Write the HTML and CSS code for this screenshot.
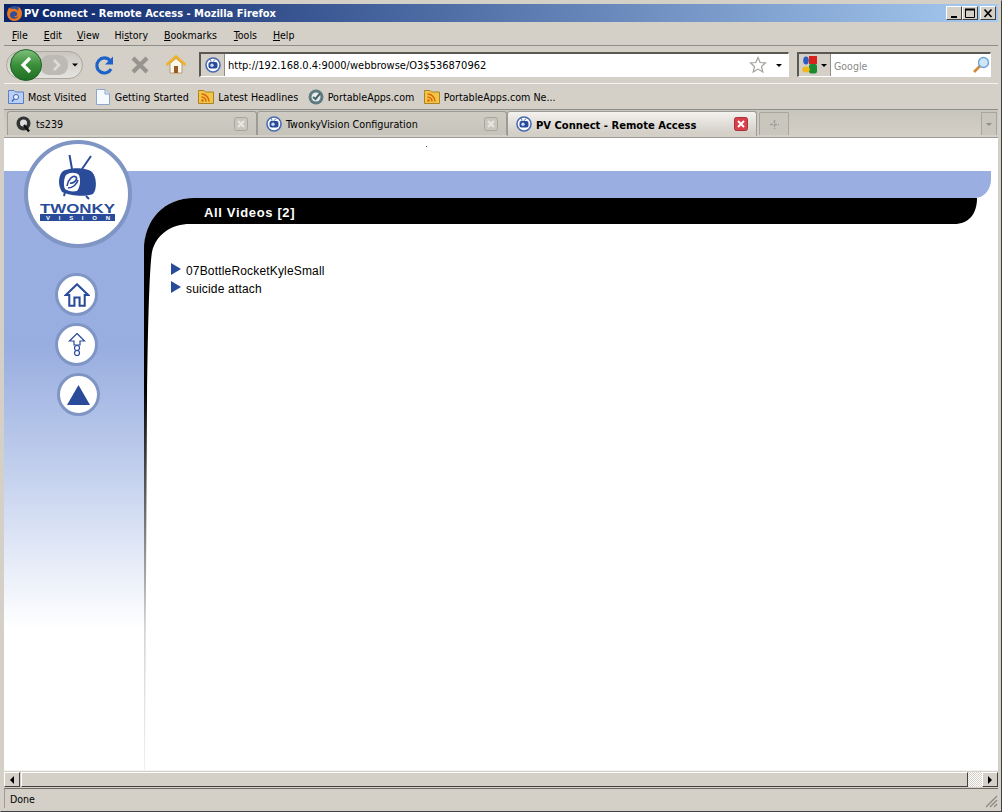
FILE: index.html
```html
<!DOCTYPE html>
<html lang="en">
<head>
    <meta charset="UTF-8">
    <title>PV Connect - Remote Access - Mozilla Firefox</title>
    <link rel="stylesheet" href="styles.css">
</head>
<body>
<svg class="sprite" width="0" height="0">
    <symbol id="tw" viewBox="0 0 16 16">
        <circle cx="8" cy="8" r="7" fill="#fff" stroke="#4a6ab4" stroke-width="1.6"/>
        <rect x="3.5" y="5" width="9" height="6.5" rx="2" fill="#2a4b9a"/>
        <circle cx="7" cy="8.2" r="1.7" fill="#cfdaf2"/>
        <path d="M6 4.8 5.5 2.5M8 4.8 10 2.5" stroke="#2a4b9a" stroke-width=".8"/>
    </symbol>
    <symbol id="rss" viewBox="0 0 16 16">
        <path d="M.5 3.5V1.5H6L7.5 3H15.5V14.5H.5Z" fill="#f3c542" stroke="#a9822a"/>
        <circle cx="4.5" cy="11.5" r="1.3" fill="#d8660e"/>
        <path d="M3.5 8a4.5 4.5 0 0 1 4.5 4.5M3.5 5a7.5 7.5 0 0 1 7.5 7.5" fill="none" stroke="#d8660e" stroke-width="1.6"/>
    </symbol>
    <symbol id="tabx" viewBox="0 0 14 14">
        <rect x=".5" y=".5" width="13" height="13" rx="2" fill="#c9c6be" stroke="#a8a59e"/>
        <path d="M4 4 10 10M10 4 4 10" stroke="#e9e7e2" stroke-width="2"/>
    </symbol>
</svg>

<div class="window">
    <!-- title bar -->
    <div class="titlebar">
        <svg class="ff-icon" width="17" height="17" viewBox="0 0 17 17">
            <circle cx="8.5" cy="8.5" r="7.5" fill="#2f4f9c"/>
            <path d="M3 2.5C2 5 1 7 1.200 9.500 1.500 13.500 5 16 8.500 16 12.500 16 16 13 16 8.500 16 5.500 14.500 3 12 1.500 13 3.500 12.500 5 11.500 5.500 10 3.500 8 3.500 6.500 4 5 3.500 4 3.500 3 2.500Z M5.500 7C7 5.800 10 6 11 8 12 10.500 9.500 12 7 11 8.500 12.500 11 12.500 12 11 11.500 13.500 8 14.500 5.500 13 3.500 11.500 3.500 8.500 5.500 7Z" fill="#e8761c" fill-rule="evenodd"/>
        </svg>
        <span class="title-text">PV Connect - Remote Access - Mozilla Firefox</span>
        <div class="win-btns">
            <div class="win-btn"><svg width="15" height="13"><rect x="4" y="9" width="6" height="2" fill="#000"/></svg></div>
            <div class="win-btn"><svg width="15" height="13"><path d="M2.500 2.500H11.500V10.500H2.500Z M2 2.500H12" fill="none" stroke="#000"/><rect x="2" y="1.500" width="10" height="2" fill="#000"/></svg></div>
            <div class="win-btn btn-close"><svg width="15" height="13"><path d="M3.500 2.500 10.500 10M10.500 2.500 3.500 10" stroke="#000" stroke-width="1.700"/></svg></div>
        </div>
    </div>

    <!-- menu -->
    <div class="menubar">
        <span class="menu-item m-file"><u>F</u>ile</span>
        <span class="menu-item m-edit"><u>E</u>dit</span>
        <span class="menu-item m-view"><u>V</u>iew</span>
        <span class="menu-item m-hist">Hi<u>s</u>tory</span>
        <span class="menu-item m-book"><u>B</u>ookmarks</span>
        <span class="menu-item m-tool"><u>T</u>ools</span>
        <span class="menu-item m-help"><u>H</u>elp</span>
    </div>

    <!-- navigation toolbar -->
    <div class="toolbar">
        <svg class="nav-pill" width="78" height="32" viewBox="0 -1 78 32">
            <defs>
                <linearGradient id="pill" x1="0" y1="0" x2="0" y2="1"><stop offset="0" stop-color="#c9c6bf"/><stop offset="1" stop-color="#e6e4df"/></linearGradient>
                <linearGradient id="grn" x1="0" y1="0" x2="0" y2="1"><stop offset="0" stop-color="#7fc07c"/><stop offset=".5" stop-color="#3a8f3a"/><stop offset="1" stop-color="#1f6e22"/></linearGradient>
            </defs>
            <rect x=".5" y="1.500" width="76" height="27" rx="13.500" fill="url(#pill)" stroke="#aaa79f"/>
            <rect x="34" y="5" width="28" height="20" rx="9" fill="#bdbab3"/>
            <path d="M48 10l5 5-5 5" fill="none" stroke="#dedcd7" stroke-width="2.600"/>
            <circle cx="20" cy="15" r="15.500" fill="url(#grn)" stroke="#21622a"/>
            <path d="M24 8l-7 7 7 7" fill="none" stroke="#fff" stroke-width="3.200"/>
            <path d="M66 13.500h6l-3 3Z" fill="#000"/>
        </svg>
        <svg class="tool-icon reload" width="22" height="22" viewBox="0 0 22 22">
            <path d="M17 6.500A7.500 7.500 0 1 0 18 15" fill="none" stroke="#1c62c8" stroke-width="3.200"/>
            <path d="M20 2.500V10.500H12Z" fill="#1c62c8"/>
        </svg>
        <svg class="tool-icon stop" width="22" height="22" viewBox="0 0 22 22">
            <path d="M4 4 18 18M18 4 4 18" stroke="#96948e" stroke-width="4.200"/>
        </svg>
        <svg class="tool-icon home" width="22" height="22" viewBox="0 0 22 22">
            <path d="M5 9.500V19H17V9.500L11 4.500Z" fill="#fbf7ea" stroke="#b59a6a"/>
            <rect x="9" y="12" width="4" height="7" fill="#9a5a26"/>
            <path d="M1.500 11 11 2.500 20.500 11" fill="none" stroke="#eeb02c" stroke-width="2.600"/>
        </svg>

        <div class="urlbar">
            <div class="url-site"><svg width="16" height="16"><use href="#tw"/></svg></div>
            <span class="url-text">http://192.168.0.4:9000/webbrowse/O3$536870962</span>
            <svg width="18" height="18" viewBox="0 0 18 18"><path d="M9 1.500 11.200 6.500 16.500 7 12.500 10.500 13.800 16 9 13.100 4.200 16 5.500 10.500 1.500 7 6.800 6.500Z" fill="#fff" stroke="#a3a19b" stroke-width="1.200"/></svg>
            <span class="drop drop-url"></span>
        </div>

        <div class="searchbar">
            <div class="search-engine">
                <svg width="16" height="18" viewBox="0 0 16 18">
                    <ellipse cx="4" cy="4.500" rx="2.800" ry="4" fill="#2a5cc4"/>
                    <rect x="7" y="0" width="8" height="8" fill="#d8231c"/>
                    <rect x="7" y="8" width="8" height="9.500" rx="2" fill="#1c8a30"/>
                    <ellipse cx="4" cy="13.500" rx="3.800" ry="3" fill="#f0b81c"/>
                </svg>
                <span class="drop"></span>
            </div>
            <span class="search-text">Google</span>
            <svg width="18" height="18" viewBox="0 0 18 18">
                <path d="M8 10 2 16" stroke="#d28a3c" stroke-width="2.600"/>
                <circle cx="11.500" cy="6.500" r="5" fill="#cfe6f8" stroke="#6ea4d4" stroke-width="1.400"/>
            </svg>
        </div>
    </div>

    <!-- bookmarks -->
    <div class="bookmarks">
        <div class="bm">
            <svg width="16" height="16" viewBox="0 0 16 16"><path d="M.5 3.500V1.500H6L7.500 3H15.500V14.500H.5Z" fill="#b9d0f4" stroke="#5a7fc4"/><circle cx="8" cy="8" r="2.500" fill="#eef4fd" stroke="#3a66b8"/><path d="M6 10 4 12.500" stroke="#3a66b8" stroke-width="1.400"/></svg>
            <span>Most Visited</span>
        </div>
        <div class="bm bm-page">
            <svg width="14" height="16" viewBox="0 0 14 16"><path d="M.5.500H9L13.500 5V15.500H.5Z" fill="#f6f9fe" stroke="#8fa6cc"/><path d="M9 .5V5H13.500" fill="#d5e2f5" stroke="#8fa6cc"/></svg>
            <span>Getting Started</span>
        </div>
        <div class="bm">
            <svg width="16" height="16"><use href="#rss"/></svg>
            <span>Latest Headlines</span>
        </div>
        <div class="bm">
            <svg width="16" height="16" viewBox="0 0 16 16"><circle cx="8" cy="8" r="7.500" fill="#5f7a80"/><circle cx="8" cy="8" r="4.500" fill="#e7ecec"/><path d="M5 8l2.500 2L12 4.500" fill="none" stroke="#4a666c" stroke-width="2"/></svg>
            <span>PortableApps.com</span>
        </div>
        <div class="bm">
            <svg width="16" height="16"><use href="#rss"/></svg>
            <span>PortableApps.com Ne...</span>
        </div>
    </div>

    <!-- tabs -->
    <div class="tabstrip">
        <div class="tab">
            <svg width="16" height="16" viewBox="0 0 16 16"><circle cx="7.500" cy="7.500" r="7" fill="#333"/><circle cx="7.500" cy="7" r="3.500" fill="#ddd"/><path d="M8 9 13 15.500" stroke="#111" stroke-width="2.400"/></svg>
            <span class="tab-label">ts239</span>
            <svg width="14" height="14"><use href="#tabx"/></svg>
        </div>
        <div class="tab">
            <svg width="16" height="16"><use href="#tw"/></svg>
            <span class="tab-label">TwonkyVision Configuration</span>
            <svg width="14" height="14"><use href="#tabx"/></svg>
        </div>
        <div class="tab tab-active">
            <svg width="16" height="16"><use href="#tw"/></svg>
            <span class="tab-label">PV Connect - Remote Access</span>
            <svg width="14" height="14" viewBox="0 0 14 14"><rect x=".5" y=".5" width="13" height="13" rx="2" fill="#d8404a" stroke="#a83038"/><path d="M4 4 10 10M10 4 4 10" stroke="#fff" stroke-width="2"/></svg>
        </div>
        <div class="tab-new"><svg width="11" height="11"><path d="M5.500 1V10M1 5.500H10" stroke="#a09d96" stroke-width="1.400" stroke-dasharray="3 1"/></svg></div>
        <div class="tab-list"><span class="drop drop-grey"></span></div>
    </div>

    <!-- page -->
    <div class="page">
        <svg class="page-bg" width="994" height="632" viewBox="0 0 994 632">
            <defs>
                <linearGradient id="side" gradientUnits="userSpaceOnUse" x1="0" y1="33" x2="0" y2="490">
                    <stop offset="0" stop-color="#9aaee2"/>
                    <stop offset=".38" stop-color="#98ade0"/>
                    <stop offset=".62" stop-color="#bccbeb"/>
                    <stop offset="1" stop-color="#fff"/>
                </linearGradient>
                <linearGradient id="curve" gradientUnits="userSpaceOnUse" x1="0" y1="60" x2="0" y2="632">
                    <stop offset="0" stop-color="#000"/>
                    <stop offset=".33" stop-color="#000"/>
                    <stop offset=".5" stop-color="#555"/>
                    <stop offset=".75" stop-color="#d4d4d4"/>
                    <stop offset="1" stop-color="#f0f0f0"/>
                </linearGradient>
            </defs>
            <rect x="0" y="33" width="141" height="599" fill="url(#side)"/>
            <path d="M0 33H987V42C987 51 980 60 971 60H0Z" fill="#9aaee2"/>
            <path d="M140 60H190C160 60 140 82 140 112Z" fill="#9aaee2"/>
            <path d="M140 632V112C140 82 160 60 190 60H973C973 76 965 86 950 86H186C168 86 152 96 148 114C146 125 144 170 143 262L141 632Z" fill="url(#curve)"/>
        </svg>
        <span class="speck"></span>

        <div class="layout">
            <div class="sidebar">
                <svg class="logo" width="108" height="108" viewBox="0 0 108 108">
                    <circle cx="54" cy="54" r="52" fill="#fff" stroke="#7f95c4" stroke-width="4"/>
                    <path d="M48 29 45.500 15M58 29 67 16" stroke="#2a4b9a" stroke-width="2" fill="none"/>
                    <path d="M38 32C44 27 62 27 68 32 73 37 73 50 69 54 62 57 46 56 38 52 34 46 34 37 38 32Z" fill="#2a4b9a"/>
                    <path d="M42 35C46 32 52 32 55 35 57 41 56 47 53 51 48 52 44 51 41 49 39 45 40 38 42 35Z" fill="#fff"/>
                    <path d="M41 52l-1 4M62 56l3 3" stroke="#2a4b9a" stroke-width="2"/>
                    <path d="M43 46C44 39 49 35 52 37 54 39 50 44 46 43M44 48C49 48 53 44 54 40" fill="none" stroke="#2a4b9a" stroke-width="1.600"/>
                    <text x="16" y="73" class="logo-name" textLength="75" lengthAdjust="spacingAndGlyphs">TWONKY</text>
                    <rect x="16" y="74" width="75" height="7" fill="#2a4b9a"/>
                    <text x="22" y="80" class="logo-sub" textLength="64">V I S I O N</text>
                </svg>
                <div class="side-nav">
                    <div class="round-btn">
                        <svg width="26" height="24" viewBox="0 0 30 28"><path d="M2 14 15 1.500 28 14H24V26.500H18V17H12V26.500H6V14Z" fill="#fff" stroke="#2a4b9a" stroke-width="2.400"/></svg>
                    </div>
                    <div class="round-btn">
                        <svg width="18" height="24" viewBox="0 0 18 24"><path d="M9 .5 16.500 8H12V12H6V8H1.500Z" fill="#fff" stroke="#2a4b9a" stroke-width="1.200"/><circle cx="9" cy="15" r="2.500" fill="none" stroke="#2a4b9a" stroke-width="1.200"/><circle cx="9" cy="20" r="2.500" fill="none" stroke="#2a4b9a" stroke-width="1.200"/></svg>
                    </div>
                    <div class="round-btn round-last">
                        <svg width="23" height="20" viewBox="0 0 23 20"><path d="M11.500 0 23 20H0Z" fill="#2a4b9a"/></svg>
                    </div>
                </div>
            </div>
            <div class="content">
                <h1 class="heading">All Videos [2]</h1>
                <ul class="video-list">
                    <li class="video-item"><span class="arrow"></span>07BottleRocketKyleSmall</li>
                    <li class="video-item"><span class="arrow"></span>suicide attach</li>
                </ul>
            </div>
        </div>
    </div>

    <!-- horizontal scrollbar -->
    <div class="hscroll">
        <div class="sb-btn"><span class="sb-left"></span></div>
        <div class="sb-thumb"></div>
        <div class="sb-track"></div>
        <div class="sb-btn"><span class="sb-right"></span></div>
    </div>

    <!-- status bar -->
    <div class="statusbar">
        <span class="status-text">Done</span>
        <svg class="grip" width="14" height="14" viewBox="0 0 14 14"><path d="M13 2 2 13M13 6 6 13M13 10 10 13" stroke="#8a8780" stroke-width="1.200"/></svg>
    </div>
</div>
</body>
</html>
```

FILE: styles.css
```css
html, body {
    margin: 0;
    padding: 0;
}
body {
    width: 1002px;
    height: 812px;
    overflow: hidden;
    font-family: "DejaVu Sans Condensed", "DejaVu Sans", sans-serif;
    font-size: 10.5px;
    color: #000;
}
.sprite {
    position: absolute;
}
.window {
    box-sizing: border-box;
    width: 1002px;
    height: 812px;
    display: flex;
    flex-direction: column;
    background: #d4d0c8;
    border: 1px solid;
    border-color: #d4d0c8 #404040 #404040 #d4d0c8;
    padding: 3px;
}

/* title bar */
.titlebar {
    height: 18px;
    flex: none;
    display: flex;
    align-items: center;
    padding-left: 2px;
    margin-bottom: 2px;
    background: linear-gradient(to right, #0a246a, #a6caf0);
}
.title-text {
    margin-left: 1px;
    color: #fff;
    font-weight: 700;
    font-size: 11px;
    white-space: nowrap;
}
.win-btns {
    margin-left: auto;
    display: flex;
    padding-right: 2px;
}
.win-btn {
    box-sizing: border-box;
    width: 16px;
    height: 14px;
    display: flex;
    background: #d4d0c8;
    border: 1px solid;
    border-color: #fff #404040 #404040 #fff;
}
.btn-close {
    margin-left: 2px;
}

/* menu */
.menubar {
    height: 21px;
    flex: none;
    display: flex;
    align-items: center;
    border-bottom: 1px solid #8f8d88;
}
.m-file { margin-left: 8px; }
.m-edit { margin-left: 16px; }
.m-view { margin-left: 15px; }
.m-hist { margin-left: 15px; }
.m-book { margin-left: 16px; }
.m-tool { margin-left: 17px; }
.m-help { margin-left: 16px; }

/* toolbar */
.toolbar {
    height: 37px;
    flex: none;
    display: flex;
    align-items: center;
    border-bottom: 1px solid #f4f3f0;
}
.nav-pill {
    margin-left: 2px;
}
.reload { margin-left: 9px; }
.stop { margin-left: 14px; }
.home { margin-left: 14px; }
.urlbar {
    box-sizing: border-box;
    width: 590px;
    height: 25px;
    margin-left: 12px;
    display: flex;
    align-items: center;
    background: #fff;
    border: 1px solid;
    border-color: #5a5852 #fff #fff #5a5852;
    border-top-width: 2px;
    border-left-width: 2px;
}
.url-site {
    box-sizing: border-box;
    width: 24px;
    height: 100%;
    display: flex;
    align-items: center;
    justify-content: center;
    background: #d4d0c8;
    border-right: 1px solid #8f8d88;
}
.url-text {
    margin-left: 3px;
    padding-top: 1px;
    flex: 1;
    font-size: 11px;
}
.drop {
    width: 0;
    height: 0;
    border-left: 3px solid transparent;
    border-right: 3px solid transparent;
    border-top: 3px solid #000;
}
.drop-url {
    margin: 0 6px 0 9px;
}
.drop-grey {
    border-top-color: #8f8d88;
}
.searchbar {
    box-sizing: border-box;
    width: 194px;
    height: 25px;
    margin-left: 8px;
    display: flex;
    align-items: center;
    background: #fff;
    border: 1px solid;
    border-color: #5a5852 #fff #fff #5a5852;
    border-top-width: 2px;
    border-left-width: 2px;
}
.search-engine {
    box-sizing: border-box;
    width: 32px;
    height: 100%;
    display: flex;
    align-items: center;
    gap: 3px;
    padding-left: 3px;
    background: #d4d0c8;
    border-right: 1px solid #8f8d88;
}
.search-text {
    flex: 1;
    margin-left: 3px;
    padding-top: 1px;
    color: #8a8a8a;
}

/* bookmarks */
.bookmarks {
    height: 25px;
    flex: none;
    display: flex;
    align-items: center;
    padding-left: 4px;
    gap: 9.5px;
    font-size: 10.65px;
}
.bm {
    display: flex;
    align-items: center;
    gap: 4px;
    white-space: nowrap;
}
.bm span {
    padding-top: 2px;
}
.bm-page {
    gap: 5px;
}

/* tabs */
.tabstrip {
    box-sizing: border-box;
    height: 29px;
    flex: none;
    display: flex;
    align-items: flex-end;
    padding: 2px 1px 2px 3px;
    border-top: 1px solid #8f8d88;
    border-bottom: 1px solid #9d9b95;
    background: linear-gradient(#c8c5bd, #d4d0c8);
}
.tab {
    box-sizing: border-box;
    width: 250px;
    height: 24px;
    display: flex;
    align-items: center;
    gap: 3px;
    padding: 0 8px;
    background: linear-gradient(#cfccc4, #c6c3bb);
    border: 1px solid #9d9b95;
    border-bottom: none;
    border-radius: 3px 3px 0 0;
    font-size: 10.7px;
}
.tab-label {
    flex: 1;
    padding: 2px 0 0 1px;
}
.tab-active {
    height: 25px;
    margin-bottom: -1px;
    background: linear-gradient(#f4f2ef, #d4d0c8 85%);
    font-weight: 700;
    font-size: 11.1px;
}
.tab-new {
    box-sizing: border-box;
    width: 30px;
    height: 23px;
    margin-left: 2px;
    display: flex;
    align-items: center;
    justify-content: center;
    background: #c9c6be;
    border: 1px solid #a8a59e;
    border-bottom: none;
    border-radius: 2px 2px 0 0;
}
.tab-list {
    box-sizing: border-box;
    width: 16px;
    height: 23px;
    margin-left: auto;
    display: flex;
    align-items: center;
    justify-content: center;
    background: #c9c6be;
    border: 1px solid #a8a59e;
    border-bottom: none;
}

/* page content */
.page {
    position: relative;
    flex: 1;
    min-height: 0;
    background: #fff;
    overflow: hidden;
}
.page-bg {
    position: absolute;
    left: 0;
    top: 0;
}
.speck {
    position: absolute;
    left: 422px;
    top: 8px;
    width: 1px;
    height: 1px;
    background: #555;
}
.layout {
    position: relative;
    display: flex;
}
.sidebar {
    width: 141px;
    flex: none;
    padding-top: 2px;
}
.logo {
    display: block;
    margin-left: 20px;
}
.logo-name {
    font-family: "Liberation Sans", sans-serif;
    font-size: 13px;
    font-weight: 700;
    fill: #2a4b9a;
}
.logo-sub {
    font-family: "Liberation Sans", sans-serif;
    font-size: 6px;
    font-weight: 700;
    fill: #fff;
}
.side-nav {
    margin-top: 25px;
    display: flex;
    flex-direction: column;
    gap: 7px;
    padding-left: 51px;
}
.round-btn {
    box-sizing: border-box;
    width: 43px;
    height: 43px;
    display: flex;
    align-items: center;
    justify-content: center;
    background: #fff;
    border: 3.5px solid #7f95c4;
    border-radius: 50%;
}
.round-last {
    margin-left: 2px;
}
.content {
    flex: 1;
}
.heading {
    margin: 67px 0 0 59px;
    color: #fff;
    font-family: "Liberation Sans", sans-serif;
    font-size: 13px;
    font-weight: 700;
    letter-spacing: .65px;
    line-height: 16px;
}
.video-list {
    list-style: none;
    margin: 41px 0 0 26px;
    padding: 0;
}
.video-item {
    display: flex;
    align-items: center;
    height: 18px;
    font-family: "Liberation Sans", sans-serif;
    font-size: 12px;
    letter-spacing: .17px;
}
.arrow {
    width: 0;
    height: 0;
    margin: -4px 5px 0 0;
    border-top: 6px solid transparent;
    border-bottom: 6px solid transparent;
    border-left: 10px solid #2a4b9a;
}

/* scrollbar and status */
.hscroll {
    height: 17px;
    flex: none;
    display: flex;
    box-sizing: border-box;
    padding-top: 1px;
    border-top: 1px solid #f4f3f0;
}
.sb-btn {
    box-sizing: border-box;
    width: 16px;
    display: flex;
    align-items: center;
    justify-content: center;
    background: #d4d0c8;
    border: 1px solid;
    border-color: #fff #404040 #404040 #fff;
}
.sb-left, .sb-right {
    width: 0;
    height: 0;
    border-top: 4px solid transparent;
    border-bottom: 4px solid transparent;
}
.sb-left {
    border-right: 4px solid #000;
}
.sb-right {
    border-left: 4px solid #000;
}
.sb-thumb {
    box-sizing: border-box;
    width: 947px;
    margin-left: 1px;
    background: #d4d0c8;
    border: 1px solid;
    border-color: #fff #404040 #404040 #fff;
}
.sb-track {
    flex: 1;
    background: repeating-conic-gradient(#fff 0 25%, #d4d0c8 0 50%) 0 0 / 2px 2px;
}
.statusbar {
    box-sizing: border-box;
    height: 20px;
    flex: none;
    display: flex;
    align-items: center;
    margin-top: 1px;
    padding-left: 5px;
    border-top: 1px solid #6f6d68;
    border-left: 1px solid #9d9b95;
}
.status-text {
    flex: 1;
}
.grip {
    margin-top: 4px;
}
```
